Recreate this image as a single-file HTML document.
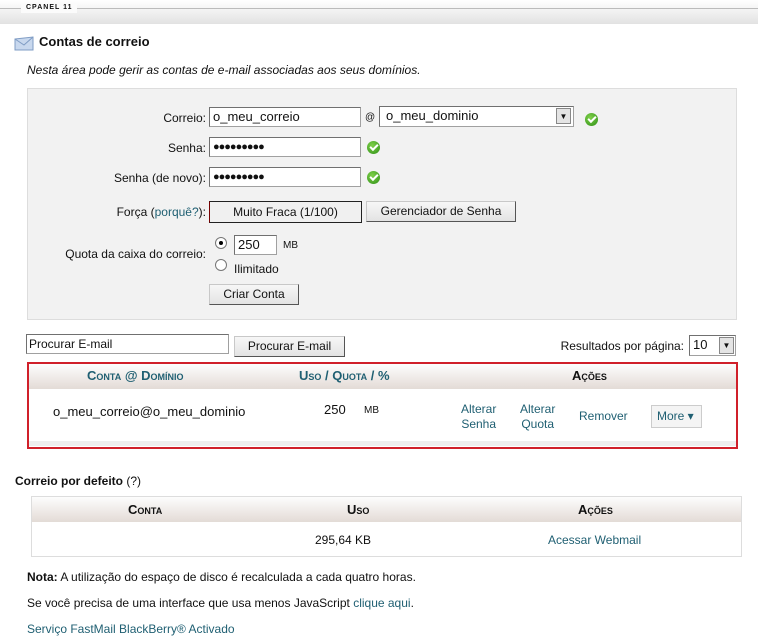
<!DOCTYPE html>
<html><head><meta charset="utf-8"><style>
body{margin:0;width:758px;height:637px;background:#fff;position:relative;overflow:hidden;font-family:"Liberation Sans",Tahoma,sans-serif;font-size:12px;color:#111}
.a{position:absolute;white-space:nowrap}
.inp{position:absolute;background:#fff;border:1px solid #a0a0a0;border-top-color:#707070;border-left-color:#707070;box-sizing:border-box;font-size:13px;padding:1px 3px;line-height:16px}
.btn{position:absolute;box-sizing:border-box;background:linear-gradient(#f7f7f7,#e3e3e3);border:1px solid #c8c8c8;border-right-color:#555;border-bottom-color:#555;font-size:12px;text-align:center;line-height:19px}
.lnk{color:#1f5f72}
.chk{position:absolute;width:13px;height:13px;border-radius:50%;background:radial-gradient(circle at 40% 35%,#7fd04a,#2e8f16);}
.chk:after{content:"";position:absolute;left:3px;top:3px;width:6px;height:3px;border-left:2px solid #fff;border-bottom:2px solid #fff;transform:rotate(-45deg)}
.th{font-weight:bold;font-variant:small-caps;font-size:13px;position:absolute}
.radio{position:absolute;width:10px;height:10px;border-radius:50%;border:1px solid #777;background:#fff}
</style></head><body>
<div class="a" style="left:0;top:0;width:758px;height:24px;background:linear-gradient(#fff,#e2e2e2)"></div>
<div class="a" style="left:0;top:8px;width:758px;height:1px;background:#bbb"></div>
<div class="a" style="left:21px;top:3px;background:#fbfbfb;padding:0 5px;font-size:7px;font-weight:bold;letter-spacing:1px;line-height:10px">CPANEL 11</div>
<svg class="a" style="left:14px;top:36px" width="20" height="15" viewBox="0 0 20 15"><path d="M1 3 L19 1 L19 14 L1 14Z" fill="#c8d8ee" stroke="#7f9cc4"/><path d="M1 3 L10 9 L19 1" fill="none" stroke="#7f9cc4"/></svg>
<div class="a" style="left:39px;top:34px;font-size:13px;font-weight:bold">Contas de correio</div>
<div class="a" style="left:27px;top:63px;font-style:italic;font-size:12px">Nesta área pode gerir as contas de e-mail associadas aos seus domínios.</div>
<div class="a" style="left:27px;top:88px;width:710px;height:232px;background:#f2f2f2;border:1px solid #ddd;box-sizing:border-box"></div>
<div class="a" style="right:552px;top:111px">Correio:</div>
<div class="inp" style="left:209px;top:107px;width:152px;height:20px">o_meu_correio</div>
<div class="a" style="left:365px;top:112px;font-size:10px">@</div>
<div class="inp" style="left:379px;top:106px;width:195px;height:21px;padding-left:6px">o_meu_dominio</div>
<div class="a" style="left:556px;top:108px;width:15px;height:16px;background:#e4e4e4;border:1px solid #888;box-sizing:border-box;font-size:8px;text-align:center;line-height:15px">▼</div>
<div class="chk" style="left:585px;top:113px"></div>
<div class="a" style="right:552px;top:141px">Senha:</div>
<div class="inp" style="left:209px;top:137px;width:152px;height:20px;font-size:11px;letter-spacing:-1px">●●●●●●●●●</div>
<div class="chk" style="left:367px;top:141px"></div>
<div class="a" style="right:552px;top:171px">Senha (de novo):</div>
<div class="inp" style="left:209px;top:167px;width:152px;height:20px;font-size:11px;letter-spacing:-1px">●●●●●●●●●</div>
<div class="chk" style="left:367px;top:171px"></div>
<div class="a" style="right:552px;top:205px">Força (<span class="lnk">porquê?</span>):</div>
<div class="a" style="left:209px;top:201px;width:153px;height:22px;border:1px solid #222;border-left-color:#700;box-sizing:border-box;background:#f0f0f0;text-align:center;line-height:20px">Muito Fraca (1/100)</div>
<div class="btn" style="left:366px;top:201px;width:150px;height:21px">Gerenciador de Senha</div>
<div class="a" style="right:552px;top:247px">Quota da caixa do correio:</div>
<div class="radio" style="left:215px;top:237px"><div style="position:absolute;left:3px;top:3px;width:4px;height:4px;border-radius:50%;background:#000"></div></div>
<div class="inp" style="left:234px;top:235px;width:43px;height:20px">250</div>
<div class="a" style="left:283px;top:240px;font-size:10px">MB</div>
<div class="radio" style="left:215px;top:259px"></div>
<div class="a" style="left:234px;top:262px">Ilimitado</div>
<div class="btn" style="left:209px;top:284px;width:90px;height:21px">Criar Conta</div>
<div class="inp" style="left:26px;top:334px;width:203px;height:20px;font-size:12px;padding:1px 2px">Procurar E-mail</div>
<div class="btn" style="left:234px;top:336px;width:111px;height:21px">Procurar E-mail</div>
<div class="a" style="right:74px;top:339px">Resultados por página:</div>
<div class="inp" style="left:689px;top:335px;width:47px;height:21px;font-size:13px">10</div>
<div class="a" style="left:719px;top:337px;width:15px;height:17px;background:#e4e4e4;border:1px solid #888;box-sizing:border-box;font-size:8px;text-align:center;line-height:16px">▼</div>
<div class="a" style="left:27px;top:362px;width:711px;height:87px;border:2px solid #d0202a;box-sizing:border-box;background:#fff"></div>
<div class="a" style="left:29px;top:364px;width:707px;height:25px;background:linear-gradient(#fdfdfd,#e3dbd6)"></div>
<div class="a" style="left:29px;top:441px;width:707px;height:5px;background:#eee"></div>
<div class="th lnk" style="left:87px;top:368px">Conta @ Domínio</div>
<div class="th lnk" style="left:299px;top:368px">Uso / Quota / %</div>
<div class="th" style="left:572px;top:368px">Ações</div>
<div class="a" style="left:53px;top:404px;font-size:13px">o_meu_correio@o_meu_dominio</div>
<div class="a" style="left:324px;top:402px;font-size:13px">250</div>
<div class="a" style="left:364px;top:405px;font-size:10px">MB</div>
<div class="a lnk" style="left:461px;top:402px;text-align:center;line-height:15px">Alterar<br>Senha</div>
<div class="a lnk" style="left:520px;top:402px;text-align:center;line-height:15px">Alterar<br>Quota</div>
<div class="a lnk" style="left:579px;top:409px">Remover</div>
<div class="a lnk" style="left:651px;top:405px;width:51px;height:23px;border:1px solid #ccc;background:#f4f4f4;box-sizing:border-box;line-height:21px;padding-left:5px">More ▾</div>
<div class="a" style="left:15px;top:474px;font-weight:bold">Correio por defeito <span style="font-weight:normal">(?)</span></div>
<div class="a" style="left:31px;top:496px;width:711px;height:61px;border:1px solid #ddd;box-sizing:border-box"></div>
<div class="a" style="left:32px;top:497px;width:709px;height:25px;background:linear-gradient(#fdfdfd,#e3dbd6)"></div>
<div class="th" style="left:128px;top:502px">Conta</div>
<div class="th" style="left:347px;top:502px">Uso</div>
<div class="th" style="left:578px;top:502px">Ações</div>
<div class="a" style="left:315px;top:533px">295,64 KB</div>
<div class="a lnk" style="left:548px;top:533px">Acessar Webmail</div>
<div class="a" style="left:27px;top:570px"><b>Nota:</b> A utilização do espaço de disco é recalculada a cada quatro horas.</div>
<div class="a" style="left:27px;top:596px">Se você precisa de uma interface que usa menos JavaScript <span class="lnk">clique aqui</span>.</div>
<div class="a lnk" style="left:27px;top:622px">Serviço FastMail BlackBerry® Activado</div>
</body></html>
